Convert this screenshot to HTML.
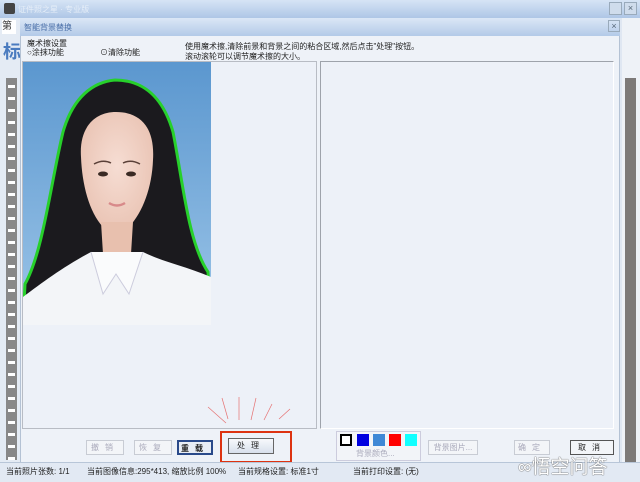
<!DOCTYPE html>
<html><head><meta charset="utf-8"><style>
*{margin:0;padding:0;box-sizing:border-box}
body{width:640px;height:482px;overflow:hidden;background:#dfe7f2;font-family:"Liberation Sans","Noto Sans CJK SC",sans-serif;font-size:9px;color:#222;position:relative}
.a{position:absolute}
.btn{position:absolute;height:15px;border:1px solid #c8ccd4;background:#f3f5f8;color:#aab;font-size:8px;text-align:center;line-height:13px;letter-spacing:6px}
.sb{position:absolute;top:466px;font-size:8px;color:#222}
</style></head><body>
<div class="a" style="left:0;top:0;width:640px;height:18px;background:linear-gradient(#d6e4f5,#aec6e6)"></div>
<div class="a" style="left:4px;top:3px;width:11px;height:11px;background:#444;border-radius:2px"></div>
<div class="a" style="left:18px;top:4px;color:#e6eef8;font-size:8px">证件照之星 · 专业版</div>
<div class="a" style="left:609px;top:2px;width:13px;height:13px;border:1px solid #9ab;background:#cfdcec"></div>
<div class="a" style="left:624px;top:2px;width:13px;height:13px;border:1px solid #9ab;background:#cfdcec;font-size:9px;text-align:center;line-height:11px;color:#567">×</div>
<div class="a" style="left:0;top:18px;width:20px;height:445px;background:#e4ebf4"></div>
<div class="a" style="left:2px;top:20px;width:14px;height:14px;background:#fff;font-size:10px;line-height:14px;color:#333">第</div>
<div class="a" style="left:3px;top:38px;font-size:18px;color:#4a7bbf;font-weight:bold">标</div>
<div class="a" style="left:6px;top:78px;width:11px;height:382px;background:repeating-linear-gradient(#888 0,#888 7px,#fff 7px,#fff 10px,#888 10px,#888 12px);border-left:2px solid #888;border-right:2px solid #888"></div>
<div class="a" style="left:622px;top:18px;width:18px;height:445px;background:#eef2f7"></div>
<div class="a" style="left:625px;top:78px;width:11px;height:385px;background:#7d7a78"></div>
<div class="a" style="left:20px;top:18px;width:600px;height:445px;background:#eef2f8;border:1px solid #b4c2d4"></div>
<div class="a" style="left:20px;top:18px;width:600px;height:18px;background:linear-gradient(#dbe7f6,#b3cae8)"></div>
<div class="a" style="left:24px;top:22px;color:#4a6fa8;font-size:8px">智能背景替换</div>
<div class="a" style="left:608px;top:20px;width:12px;height:12px;border:1px solid #9ab;font-size:9px;text-align:center;line-height:10px;color:#567">×</div>
<div class="a" style="left:27px;top:38px;font-size:8px">魔术擦设置</div>
<div class="a" style="left:27px;top:47px;font-size:8px">○涂抹功能</div>
<div class="a" style="left:100px;top:47px;font-size:8px">⊙清除功能</div>
<div class="a" style="left:185px;top:41px;font-size:8px">使用魔术擦,清除前景和背景之间的粘合区域,然后点击"处理"按钮。</div>
<div class="a" style="left:185px;top:51px;font-size:8px">滚动滚轮可以调节魔术擦的大小。</div>
<div class="a" style="left:22px;top:61px;width:295px;height:368px;border:1px solid #b8bcc4;background:#edf1f8"></div>
<div class="a" style="left:320px;top:61px;width:294px;height:368px;border:1px solid #9ea3ab;border-right-color:#fff;border-bottom-color:#fff;background:#edf1f8"></div>
<svg class="a" style="left:23px;top:62px" width="188" height="263" viewBox="0 0 188 263">
<defs><linearGradient id="bg" x1="0" y1="0" x2="0" y2="1"><stop offset="0" stop-color="#5b97cf"/><stop offset="1" stop-color="#9cc5e8"/></linearGradient>
<radialGradient id="sk" cx=".5" cy=".45" r=".6"><stop offset="0" stop-color="#f6ddd3"/><stop offset="1" stop-color="#e9c2b2"/></radialGradient></defs>
<rect width="188" height="263" fill="url(#bg)"/>
<path d="M2 222 C20 190 28 120 40 70 C50 35 70 20 92 18 C120 18 140 35 150 70 C160 120 165 180 185 210 L188 263 L0 263 Z" fill="#1b1a1e" stroke="#27d02b" stroke-width="3"/>
<path d="M58 95 C56 65 72 50 93 50 C118 50 132 66 130 98 C129 125 120 150 106 165 C98 172 88 172 80 165 C66 150 59 122 58 95Z" fill="url(#sk)"/>
<path d="M78 160 L80 192 L108 192 L110 160Z" fill="#e8c0ae"/>
<path d="M0 235 C20 220 40 205 68 190 L93 205 L120 190 C140 200 165 205 188 215 L188 263 L0 263Z" fill="#f3f5f8"/>
<path d="M68 190 L80 232 L93 212 L106 232 L120 190" fill="#fafbfc" stroke="#ccd" stroke-width="1"/>
<ellipse cx="80" cy="112" rx="5" ry="2.5" fill="#3a2a24"/><ellipse cx="108" cy="112" rx="5" ry="2.5" fill="#3a2a24"/>
<path d="M71 102 Q80 97 88 101 M100 101 Q108 97 117 102" stroke="#5a4038" stroke-width="1.5" fill="none"/>
<path d="M86 141 Q94 146 102 141" stroke="#d88a8a" stroke-width="2.5" fill="none"/>
</svg>
<svg class="a" style="left:200px;top:395px" width="100" height="35" viewBox="0 0 100 35"><g stroke="#e57070" stroke-width="0.7">
<line x1="8" y1="12" x2="26" y2="28"/><line x1="22" y1="3" x2="28" y2="24"/><line x1="39" y1="2" x2="39" y2="25"/><line x1="56" y1="3" x2="51" y2="25"/><line x1="72" y1="9" x2="64" y2="25"/><line x1="90" y1="14" x2="79" y2="24"/></g></svg>
<div class="btn" style="left:86px;top:440px;width:38px">撤销</div>
<div class="btn" style="left:134px;top:440px;width:38px">恢复</div>
<div class="btn" style="left:177px;top:440px;width:36px;border:2px solid #2a4a8a;color:#222;font-weight:bold;background:#e8edf5">重载</div>
<div class="a" style="left:220px;top:431px;width:72px;height:32px;border:2px solid #d31"></div>
<div class="btn" style="left:228px;top:438px;width:46px;height:16px;border:1px solid #666;color:#222;background:linear-gradient(#f7f9fc,#d8e0ec)">处理</div>
<div class="a" style="left:336px;top:431px;width:85px;height:30px;border:1px solid #ccd;background:#f2f4f8"></div>
<div class="a" style="left:340px;top:434px;width:12px;height:12px;border:2px solid #000;background:#fff"></div>
<div class="a" style="left:357px;top:434px;width:12px;height:12px;background:#0000e0"></div>
<div class="a" style="left:373px;top:434px;width:12px;height:12px;background:#3f88d6"></div>
<div class="a" style="left:389px;top:434px;width:12px;height:12px;background:#f00"></div>
<div class="a" style="left:405px;top:434px;width:12px;height:12px;background:#1ff"></div>
<div class="a" style="left:356px;top:448px;font-size:8px;color:#aab">背景颜色...</div>
<div class="btn" style="left:428px;top:440px;width:50px;letter-spacing:0">背景图片...</div>
<div class="btn" style="left:514px;top:440px;width:36px">确定</div>
<div class="btn" style="left:570px;top:440px;width:44px;border:1px solid #555;color:#222">取消</div>
<div class="a" style="left:0;top:462px;width:640px;height:20px;background:#e2e9f3;border-top:1px solid #b8c6d8"></div>
<div class="sb" style="left:6px">当前照片张数: 1/1</div>
<div class="sb" style="left:87px">当前图像信息:295*413, 缩放比例 100%</div>
<div class="sb" style="left:238px">当前规格设置: 标准1寸</div>
<div class="sb" style="left:353px">当前打印设置: (无)</div>
<div class="a" style="left:518px;top:452px;font-size:19px;color:#fff;text-shadow:0 0 1px #555,0 0 1px #555">∞悟空问答</div>
</body></html>
